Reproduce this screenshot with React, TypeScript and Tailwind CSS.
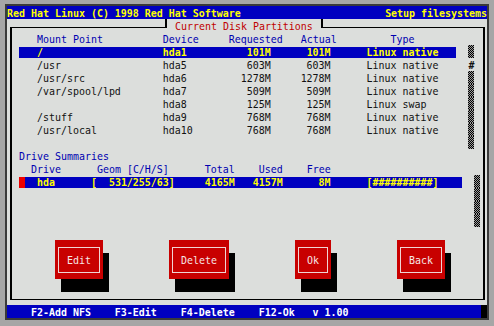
import React from "react";

interface ISeg {
  col: number;
  text?: string;
  cls?: string;
  shade?: boolean;
}

interface IPartition {
  mount: string;
  device: string;
  requested: string;
  actual: string;
  type: string;
}

const partitions: IPartition[] = [
  { mount: "/", device: "hda1", requested: "101M", actual: "101M", type: "Linux native" },
  { mount: "/usr", device: "hda5", requested: "603M", actual: "603M", type: "Linux native" },
  { mount: "/usr/src", device: "hda6", requested: "1278M", actual: "1278M", type: "Linux native" },
  { mount: "/var/spool/lpd", device: "hda7", requested: "509M", actual: "509M", type: "Linux native" },
  { mount: "", device: "hda8", requested: "125M", actual: "125M", type: "Linux swap" },
  { mount: "/stuff", device: "hda9", requested: "768M", actual: "768M", type: "Linux native" },
  { mount: "/usr/local", device: "hda10", requested: "768M", actual: "768M", type: "Linux native" },
];

const buttons = [
  { label: "Edit", w: "w-[48px]" },
  { label: "Delete", w: "w-[60px]" },
  { label: "Ok", w: "w-[36px]" },
  { label: "Back", w: "w-[48px]" },
];

// build a fixed width string, fields are given in screen columns
const fill = (from: number, to: number, fields: [number, string][]) => {
  const arr = Array(to - from + 1).fill(" ");
  fields.forEach(([c, t]) => {
    for (let i = 0; i < t.length; i++) arr[c - from + i] = t[i];
  });
  return arr.join("");
};

const HILITE = "bg-[#0000c0] text-[#ffff00] font-bold";
const HEAD = "text-[#0000b0]";

const Shade: React.FC = () => (
  <span className="inline-block w-[6px] h-[13px] align-top bg-[image:repeating-conic-gradient(#000_0_25%,#9c9c9c_0_50%)] bg-[length:2px_2px]" />
);

const Line: React.FC<{ segs?: ISeg[] }> = ({ segs = [] }) => {
  let cur = 1;
  return (
    <div className="h-[13px] whitespace-pre">
      {segs.map((s, i) => {
        const gap = " ".repeat(Math.max(0, s.col - cur));
        cur = s.col + (s.shade ? 1 : (s.text ?? "").length);
        return (
          <React.Fragment key={i}>
            {gap}
            {s.shade ? <Shade /> : <span className={s.cls}>{s.text}</span>}
          </React.Fragment>
        );
      })}
    </div>
  );
};

const partRow = (p: IPartition): [number, string][] => [
  [5, p.mount],
  [26, p.device],
  [44 - p.requested.length, p.requested],
  [54 - p.actual.length, p.actual],
  [60, p.type],
];

const App: React.FC = () => {
  return (
    <div className="w-[494px] h-[326px] bg-[#a6a6a6] pl-[5px] pt-[4px] pr-[5px] pb-[6px] font-['DejaVu_Sans_Mono',monospace] text-[9.966px] leading-[15px] text-[#111]">
      <div className="w-[484px] h-[316px] border-2 border-[#3a3a3a] bg-[#dcdedc] flex flex-col">
        <div className={`h-[13px] flex justify-between whitespace-pre ${HILITE}`}>
          <span>Red Hat Linux (C) 1998 Red Hat Software</span>
          <span>Setup filesystems</span>
        </div>

        <div className="h-[286px] pl-[3px] pr-[2px]">
          <div className="relative mt-[8px] border-y border-x-2 border-black pt-[4px] pb-[7px] pl-[1px]">
            <div className="absolute left-[153px] -top-[9px] w-[158px] h-[9px] border-x-2 border-black bg-[#dcdedc] pl-[8px] whitespace-pre text-[#c00000]">
              Current Disk Partitions
            </div>

            <Line
              segs={[
                { col: 5, text: "Mount Point", cls: HEAD },
                { col: 26, text: "Device", cls: HEAD },
                { col: 37, text: "Requested", cls: HEAD },
                { col: 49, text: "Actual", cls: HEAD },
                { col: 64, text: "Type", cls: HEAD },
              ]}
            />
            {partitions.map((p, idx) =>
              idx === 0 ? (
                <Line
                  key={idx}
                  segs={[
                    { col: 2, text: fill(2, 74, partRow(p)), cls: HILITE },
                    { col: 77, shade: true },
                  ]}
                />
              ) : (
                <Line
                  key={idx}
                  segs={[
                    { col: 1, text: fill(1, 74, partRow(p)) },
                    idx === 1
                      ? { col: 77, text: "#", cls: "font-bold" }
                      : { col: 77, shade: true },
                  ]}
                />
              )
            )}
            <Line segs={[{ col: 77, shade: true }]} />

            <Line segs={[{ col: 2, text: "Drive Summaries", cls: HEAD }]} />
            <Line
              segs={[
                { col: 4, text: "Drive", cls: HEAD },
                { col: 15, text: "Geom [C/H/S]", cls: HEAD },
                { col: 33, text: "Total", cls: HEAD },
                { col: 42, text: "Used", cls: HEAD },
                { col: 50, text: "Free", cls: HEAD },
              ]}
            />
            <Line
              segs={[
                { col: 2, text: " ", cls: "bg-[#ee0000]" },
                {
                  col: 3,
                  text: fill(3, 75, [
                    [5, "hda"],
                    [14, "["],
                    [17, "531/255/63]"],
                    [33, "4165M"],
                    [41, "4157M"],
                    [52, "8M"],
                    [60, "[##########]"],
                  ]),
                  cls: HILITE,
                },
                { col: 78, shade: true },
              ]}
            />
            <Line segs={[{ col: 78, shade: true }]} />
            <Line segs={[{ col: 78, shade: true }]} />
            <Line segs={[{ col: 78, shade: true }]} />
            <Line />

            <div className="h-[52px] flex gap-[66px] pl-[42px]">
              {buttons.map((b) => (
                <div
                  key={b.label}
                  className={`${b.w} h-[39px] bg-[#c80000] shadow-[6px_13px_0_0_#000] pt-[7px] pb-[6px] px-[3px]`}
                >
                  <div className="h-full border border-[#f0d4d4] flex items-center justify-center text-[#f6e6e6]">
                    {b.label}
                  </div>
                </div>
              ))}
            </div>
          </div>
        </div>

        <div className="h-[13px] flex">
          <div className="w-[474px] bg-[#0000c0] text-white font-bold whitespace-pre">
            {fill(0, 78, [
              [4, "F2-Add NFS"],
              [18, "F3-Edit"],
              [29, "F4-Delete"],
              [42, "F12-Ok"],
              [51, "v 1.00"],
            ])}
          </div>
          <div className="w-[6px] bg-black" />
        </div>
      </div>
    </div>
  );
};

export default App;
